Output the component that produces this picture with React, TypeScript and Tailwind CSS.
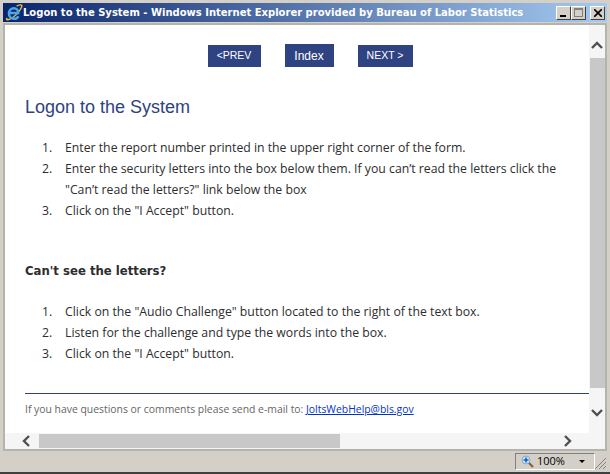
const bodyFont = "font-['Open_Sans','Noto_Sans',sans-serif]";

function ChevronIcon({ dir }: { dir: "up" | "down" | "left" | "right" }) {
  const d = {
    up: "M2 9 L7 4 L12 9",
    down: "M2 4 L7 9 L12 4",
    left: "M9 2 L4 7 L9 12",
    right: "M4 2 L9 7 L4 12",
  }[dir];
  return (
    <svg width="14" height="14" viewBox="0 0 14 14" fill="none">
      <path d={d} stroke="#505050" strokeWidth="2.4" />
    </svg>
  );
}

function IeLogo() {
  return (
    <svg width="18" height="18" viewBox="0 0 17 17" fill="none" className="shrink-0">
      <path d="M2 13 C0 16 4 15 7 13 C11 10 15 5 16 2 C16 0 13 1 11 2" stroke="#f0c040" strokeWidth="1.3" />
      <path d="M4 8.5 H12.5 C12.5 5.5 10.5 4 8.5 4 C6 4 3.7 6 3.7 9 C3.7 12 6 14 8.5 14 C10.5 14 12 13 12.6 11.5" stroke="#4aa6ea" strokeWidth="2.4" />
    </svg>
  );
}

function WinButton({ children }: { children: React.ReactNode }) {
  return (
    <div className="flex h-[14px] w-[15px] items-center justify-center border border-t-white border-l-white border-r-[#404040] border-b-[#404040] bg-[#d4d0c8]">
      {children}
    </div>
  );
}

function NavButton({ label, className }: { label: string; className: string }) {
  return (
    <a className={`flex items-center justify-center bg-[#2f4282] font-['Liberation_Sans',sans-serif] text-white ${className}`}>
      {label}
    </a>
  );
}

function Steps({ items }: { items: React.ReactNode[] }) {
  return (
    <ol className="flex flex-col">
      {items.map((item, i) => (
        <li key={i} className="flex text-[12.25px] leading-[21px] text-[#2d2d2d]">
          <span className="w-[40px] pl-[17px]">{i + 1}.</span>
          <span className="flex-1 whitespace-nowrap">{item}</span>
        </li>
      ))}
    </ol>
  );
}

export default function App() {
  return (
    <div className="flex h-[474px] w-[610px] flex-col overflow-hidden border-b-2 border-b-[#404040] bg-[#d4d0c8] px-[3px] pt-[3px]">
      <div className="flex h-[19px] shrink-0 items-center bg-[linear-gradient(90deg,#0a246a,#a6caf0)] pl-[2px] pr-[2px]">
        <IeLogo />
        <span className="flex-1 whitespace-nowrap font-['DejaVu_Sans',sans-serif] text-[10px] font-bold text-white">
          Logon to the System - Windows Internet Explorer provided by Bureau of Labor Statistics
        </span>
        <div className="flex">
          <WinButton>
            <div className="mt-[6px] mr-[2px] h-[2px] w-[6px] bg-black" />
          </WinButton>
          <WinButton>
            <div className="h-[9px] w-[9px] border border-t-2 border-[#808080]" />
          </WinButton>
          <div className="w-[4px]" />
          <WinButton>
            <svg width="8" height="8" viewBox="0 0 8 8">
              <path d="M0 0 L8 8 M8 0 L0 8" stroke="#000" strokeWidth="1.6" />
            </svg>
          </WinButton>
        </div>
      </div>

      <div className="mt-[1px] flex h-[428px] shrink-0 flex-col border-2 border-[#b4b4ae]">
        <div className="flex min-h-0 flex-1">
          <div className={`flex w-[584px] flex-col bg-white pl-5 ${bodyFont}`}>
            <div className="flex justify-center gap-6 pl-[6px] pt-[19px]">
              <NavButton label="<PREV" className="mt-px h-[22px] w-[53px] text-[10.5px]" />
              <NavButton label="Index" className="h-[23px] w-[49px] text-[12px]" />
              <NavButton label="NEXT >" className="mt-px h-[22px] w-[55px] text-[10.5px]" />
            </div>
            <h1 className="mt-[28px] font-['Liberation_Sans',sans-serif] text-[18px] leading-[24px] text-[#2f4282]">
              Logon to the System
            </h1>
            <div className="mt-[18px]">
              <Steps
                items={[
                  "Enter the report number printed in the upper right corner of the form.",
                  <>
                    Enter the security letters into the box below them. If you can’t read the letters click the
                    <br />
                    "Can’t read the letters?" link below the box
                  </>,
                  'Click on the "I Accept" button.',
                ]}
              />
            </div>
            <p className="mt-[40px] font-['DejaVu_Sans',sans-serif] text-[11.7px] font-bold leading-[21px] text-[#2d2d2d]">
              Can't see the letters?
            </p>
            <div className="mt-[19px]">
              <Steps
                items={[
                  'Click on the "Audio Challenge" button located to the right of the text box.',
                  "Listen for the challenge and type the words into the box.",
                  'Click on the "I Accept" button.',
                ]}
              />
            </div>
            <div className="mt-[29px] border-t border-t-[#2f4282] pt-[8px] text-[10.4px] leading-[15px] text-[#666666]">
              If you have questions or comments please send e-mail to:{" "}
              <a className="text-[#0033cc] underline">JoltsWebHelp@bls.gov</a>
            </div>
          </div>
          <div className="flex w-[16px] flex-col bg-[#f5f5f5]">
            <div className="flex h-[33px] items-center justify-center pt-[8px]">
              <ChevronIcon dir="up" />
            </div>
            <div className="ml-px h-[330px] w-[15px] bg-[#c8c8c8]" />
            <div className="flex flex-1 items-center justify-center pt-[4px]">
              <ChevronIcon dir="down" />
            </div>
          </div>
        </div>
        <div className="flex h-[16px] items-center bg-[#f5f5f5]">
          <div className="flex w-[34px] justify-center pl-[10px]">
            <ChevronIcon dir="left" />
          </div>
          <div className="h-[14px] w-[301px] bg-[#c8c8c8]" />
          <div className="flex flex-1 justify-end pr-[30px]">
            <ChevronIcon dir="right" />
          </div>
        </div>
      </div>

      <div className="flex flex-1 items-start justify-end pt-[2px]">
        <div className="flex h-[17px] w-[80px] items-center border border-t-[#808080] border-l-[#808080] border-r-white border-b-white pl-[5px]">
          <svg width="13" height="13" viewBox="0 0 13 13" fill="none">
            <circle cx="5" cy="5" r="4" fill="#cfe6fa" stroke="#8aa8c8" />
            <path d="M5 2.5 V7.5 M2.5 5 H7.5" stroke="#1060d0" strokeWidth="1.6" />
            <path d="M8 8 L12 12" stroke="#8a5a2a" strokeWidth="2" />
          </svg>
          <span className="ml-[3px] font-['Open_Sans',sans-serif] text-[11px] text-black">100%</span>
          <div className="ml-[14px] h-0 w-0 border-x-[3px] border-t-[3px] border-x-transparent border-t-black" />
        </div>
        <svg width="12" height="17" viewBox="0 0 12 17" className="shrink-0">
          <path d="M0 16 L11 5 M4 16 L11 9 M8 16 L11 13" stroke="#808080" strokeWidth="1" />
        </svg>
      </div>
    </div>
  );
}
